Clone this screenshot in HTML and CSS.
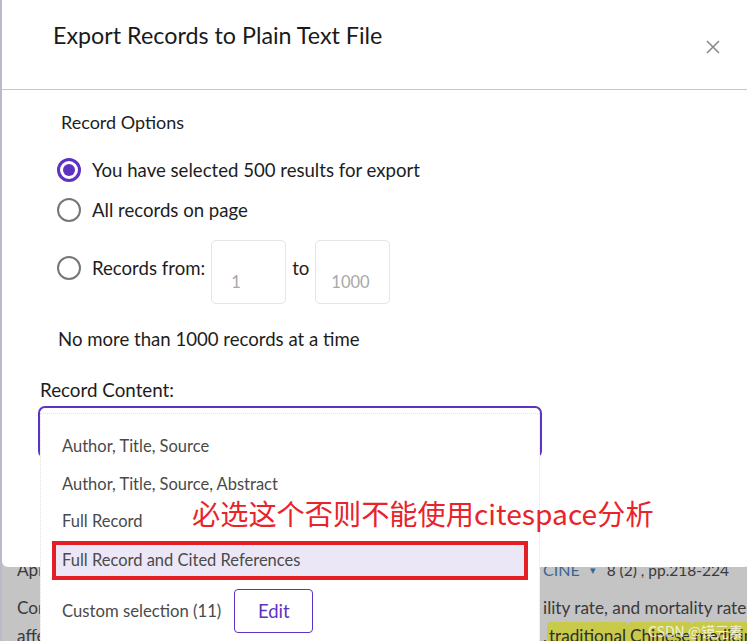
FILE: index.html
```html
<!DOCTYPE html>
<html lang="en">
<head>
<meta charset="utf-8">
<title>Export Records to Plain Text File</title>
<link rel="stylesheet" href="styles.css">
</head>
<body>
<div class="page">
  <div class="bg-row">
    <span class="bg-left">April 2021</span>
    <span class="bg-right"><span class="bg-link">CINE</span><span class="bg-caret">&#9662;</span><span class="bg-pages">8 (2) , pp.218-224</span></span>
  </div>
  <div class="bg-row">
    <span class="bg-left">Conclusion</span>
    <span class="bg-right">ility rate, and mortality rate, t</span>
  </div>
  <div class="bg-row">
    <span class="bg-left">affected</span>
    <span class="bg-right">, <mark class="hl">traditional</mark> <mark class="hl">Chinese</mark> <mark class="hl">medicine</mark></span>
  </div>
</div>

<div class="modal">
  <div class="modal-header">
    <h1 class="modal-title">Export Records to Plain Text File</h1>
    <button class="close-btn" aria-label="Close">
      <svg width="14" height="14" viewBox="0 0 14 14"><path d="M1 1L13 13M13 1L1 13" stroke="#8a8a8a" stroke-width="1.6" fill="none"/></svg>
    </button>
  </div>
  <div class="modal-body">
    <div class="section-label">Record Options</div>
    <div class="radio-row row1">
      <span class="radio checked"></span>
      <span class="radio-label">You have selected 500 results for export</span>
    </div>
    <div class="radio-row row2">
      <span class="radio"></span>
      <span class="radio-label">All records on page</span>
    </div>
    <div class="radio-row row3">
      <span class="radio raised"></span>
      <span class="radio-label raised">Records from:</span>
      <input class="num-input" type="text" placeholder="1">
      <span class="radio-label raised to">to</span>
      <input class="num-input" type="text" placeholder="1000">
    </div>
    <div class="note">No more than 1000 records at a time</div>
    <div class="content-label">Record Content:</div>
    <div class="select-wrap">
      <div class="select-box"></div>
      <div class="dropdown">
        <div class="opt">Author, Title, Source</div>
        <div class="opt">Author, Title, Source, Abstract</div>
        <div class="opt">Full Record</div>
        <div class="opt active">Full Record and Cited References</div>
        <div class="opt-custom">
          <span>Custom selection (11)</span>
          <button class="edit-btn">Edit</button>
        </div>
      </div>
    </div>
  </div>
</div>

<div class="annotation">必选这个否则不能使用citespace分析</div>
<div class="watermark">CSDN @镆元素</div>
</body>
</html>
```
FILE: styles.css
```css
* { box-sizing: border-box; }
html, body {
  margin: 0;
  padding: 0;
  width: 747px;
  height: 641px;
  overflow: hidden;
}
body {
  background: #c4c4c4;
  font-family: "Source Sans Pro", "Lato", "Noto Sans", sans-serif;
  position: relative;
}

/* dimmed page behind the modal */
.page {
  padding-top: 556px;
  padding-left: 15px;
  color: #3a3a3a;
  font-size: 17.2px;
  border-left: 2px solid #bdb8cc;
  height: 641px;
  overflow: hidden;
}
.bg-row {
  display: grid;
  grid-template-columns: 526px auto;
  height: 28px;
  line-height: 28px;
  white-space: nowrap;
}
.bg-row:first-child { height: 38px; }
.bg-right { display: flex; }
.bg-link { color: #3b6790; margin-right: 10px; font-size: 16px; }
.bg-caret { color: #3b6790; font-size: 11px; margin-right: 11px; }
.bg-pages { font-size: 15.5px; }
.hl {
  background: #c9c94a;
  color: #2e2e2e;
  border-radius: 4px;
  padding: 0 2px;
}

/* modal */
.modal {
  position: absolute;
  left: 2px;
  top: -10px;
  width: 748px;
  height: 577px;
  background: #fff;
  border-radius: 6px;
  color: #1d1d1d;
}
.modal-header {
  height: 100px;
  border-bottom: 1px solid #c6c6c6;
  display: flex;
  justify-content: space-between;
  align-items: flex-start;
  padding: 0 30px 0 51px;
}
.modal-title {
  margin: 30px 0 0 0;
  font-weight: 400;
  font-size: 23.3px;
  line-height: 30px;
  color: #1a1a1a;
}
.close-btn {
  margin-top: 50px;
  border: 0;
  background: none;
  padding: 0;
  width: 14px;
  height: 14px;
  display: block;
}
.close-btn svg { display: block; }

.modal-body {
  padding-left: 55px;
}
.section-label {
  margin-top: 20px;
  margin-left: 4px;
  font-size: 18px;
  line-height: 24px;
}
.radio-row {
  display: flex;
  align-items: center;
  gap: 11px;
  font-size: 18.6px;
  line-height: 24px;
}
.row1 { margin-top: 24px; }
.row2 { margin-top: 16px; }
.row3 { margin-top: 18px; height: 64px; gap: 6px; }
.row3 .radio { margin-right: 5px; }
.raised { position: relative; top: -4px; }
.radio {
  width: 24px;
  height: 24px;
  border-radius: 50%;
  border: 2px solid #777;
  flex: none;
  background: #fff;
}
.radio.checked {
  border: 3px solid #5e33bf;
  padding: 3px;
  background: #5e33bf;
  background-clip: content-box;
}
.num-input {
  width: 75px;
  height: 64px;
  border: 1px solid #e6e6e6;
  border-radius: 5px;
  padding: 20px 0 0 19px;
  font-family: inherit;
  font-size: 16.5px;
  color: #333;
  background: #fff;
}
.num-input::placeholder { color: #a8a8a8; }
.row3 .num-input:last-child { padding-left: 15px; }

.note {
  margin-top: 23px;
  margin-left: 1px;
  font-size: 18.6px;
  line-height: 24px;
}
.content-label {
  margin-top: 27px;
  margin-left: -17px;
  font-size: 18.8px;
  line-height: 24px;
}
.select-wrap {
  position: relative;
  margin-top: 4px;
  margin-left: -19px;
  width: 504px;
}
.select-box {
  height: 52px;
  border: 2px solid #5e33bf;
  border-radius: 7px;
}
.dropdown {
  position: absolute;
  left: 2px;
  top: 7px;
  width: 500px;
  height: 250px;
  background: #fff;
  border: 1px dotted #e2e2e2;
  padding-top: 14px;
  color: #4a4a4a;
  font-size: 16.5px;
}
.opt {
  height: 37.5px;
  line-height: 37.5px;
  padding-left: 21px;
}
.opt.active {
  margin: 0 11px;
  height: 39.5px;
  line-height: 39px;
  padding-left: 10px;
  background: #ece7f7;
  box-shadow: inset 0 0 0 4px #e41e25;
  margin-bottom: -2px;
}
.opt-custom {
  display: flex;
  align-items: center;
  gap: 13px;
  margin-top: 10.5px;
  padding-left: 21px;
  line-height: 44px;
  font-size: 16.7px;
}
.edit-btn {
  width: 79px;
  height: 44px;
  border: 1px solid #5e33bf;
  border-radius: 4px;
  background: #fff;
  color: #5e33bf;
  font-family: inherit;
  font-size: 18.5px;
}

/* overlay annotations */
.annotation {
  position: absolute;
  left: 192px;
  top: 493px;
  font-family: "Noto Sans CJK SC", "Noto Sans", sans-serif;
  font-size: 28.2px;
  line-height: 40px;
  color: #e8242a;
  white-space: nowrap;
}
.watermark {
  position: absolute;
  left: 648px;
  top: 621px;
  font-family: "Noto Sans CJK SC", sans-serif;
  font-size: 14px;
  color: rgba(255,255,255,0.75);
  white-space: nowrap;
}
```
